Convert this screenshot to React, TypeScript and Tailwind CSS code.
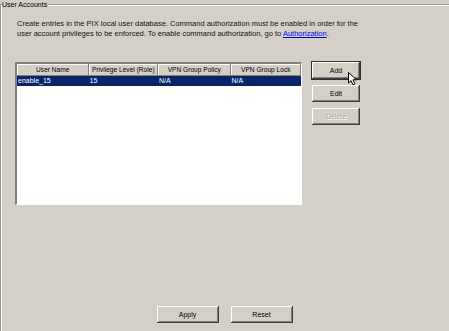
const columns = ['User Name', 'Privilege Level (Role)', 'VPN Group Policy', 'VPN Group Lock']
const widths = ['w-[72px]', 'w-[70px]', 'w-[73px]', 'w-[71px]']
const rows = [['enable_15', '15', 'N/A', 'N/A']]

const raised =
  'shadow-[inset_-1px_-1px_#404040,inset_1px_1px_#ffffff,inset_-2px_-2px_#808080]'

function Btn({ label, focused, disabled, wide }: { label: string; focused?: boolean; disabled?: boolean; wide?: boolean }) {
  return (
    <button
      type="button"
      className={`flex items-center justify-center bg-[#d4d0c8] text-[7px] leading-none ${wide ? 'h-[17px] w-[62px]' : 'h-[17px] w-[48px]'} ${raised} ${
        focused ? 'outline outline-1 outline-[#303030]' : ''
      } ${disabled ? 'text-[#b0aca4] [text-shadow:1px_1px_#ffffff]' : 'text-black'}`}
    >
      {label}
    </button>
  )
}

function Cursor() {
  return (
    <svg className="absolute left-[348px] top-[72px]" width="11" height="14" viewBox="0 0 11 14">
      <path d="M0.5 0.5 L0.5 11 L3 8.6 L5 12.8 L6.9 11.9 L5 7.8 L8.5 7.8 Z" fill="#ffffff" stroke="#000000" strokeWidth="1" strokeLinejoin="miter" />
    </svg>
  )
}

export default function App() {
  return (
    <div className="relative flex h-[331px] w-[449px] flex-col overflow-hidden bg-[#d4d0c8] font-['Liberation_Sans',Arial,sans-serif] text-black">
      <div className="relative mt-[4px] flex flex-1 flex-col border-l border-t border-[#9a9890] shadow-[inset_1px_1px_#ffffff]">
        <span className="absolute left-[1px] top-[-6px] bg-[#d4d0c8] pr-[1px] text-[7px] leading-[11px]">User Accounts</span>

        <p className="ml-[16px] mt-[14px] text-[7.5px] leading-[10px] text-[#111]">
          Create entries in the PIX local user database. Command authorization must be enabled in order for the
          <br />
          user account privileges to be enforced. To enable command authorization, go to{' '}
          <span className="text-[#0000ee] underline">Authorization</span>.
        </p>

        <div className="ml-[14px] mt-[23px] flex gap-[10px]">
          <div className="flex h-[143px] w-[287px] flex-col border-b border-r border-b-white border-r-white border-l-[2px] border-t-[2px] border-l-[#808080] border-t-[#808080] bg-white">
            <div className="flex h-[12px] bg-[#d4d0c8]">
              {columns.map((c, i) => (
                <div
                  key={c}
                  className={`${widths[i]} flex items-center justify-center whitespace-nowrap text-[6.6px] leading-none shadow-[inset_-1px_-1px_#808080,inset_1px_1px_#ffffff]`}
                >
                  {c}
                </div>
              ))}
            </div>
            {rows.map((r) => (
              <div key={r[0]} className="flex h-[10px] bg-[#0a246a] text-white">
                {r.map((v, i) => (
                  <div key={i} className={`${widths[i]} pl-[1px] text-[7px] leading-[10px]`}>
                    {v}
                  </div>
                ))}
              </div>
            ))}
          </div>

          <div className="flex flex-col gap-[6px]">
            <Btn label="Add" focused />
            <Btn label="Edit" />
            <Btn label="Delete" disabled />
          </div>
        </div>

        <div className="mt-auto mb-[8px] flex justify-center gap-[12px] pr-[1px]">
          <Btn label="Apply" wide />
          <Btn label="Reset" wide />
        </div>
      </div>
      <Cursor />
    </div>
  )
}
